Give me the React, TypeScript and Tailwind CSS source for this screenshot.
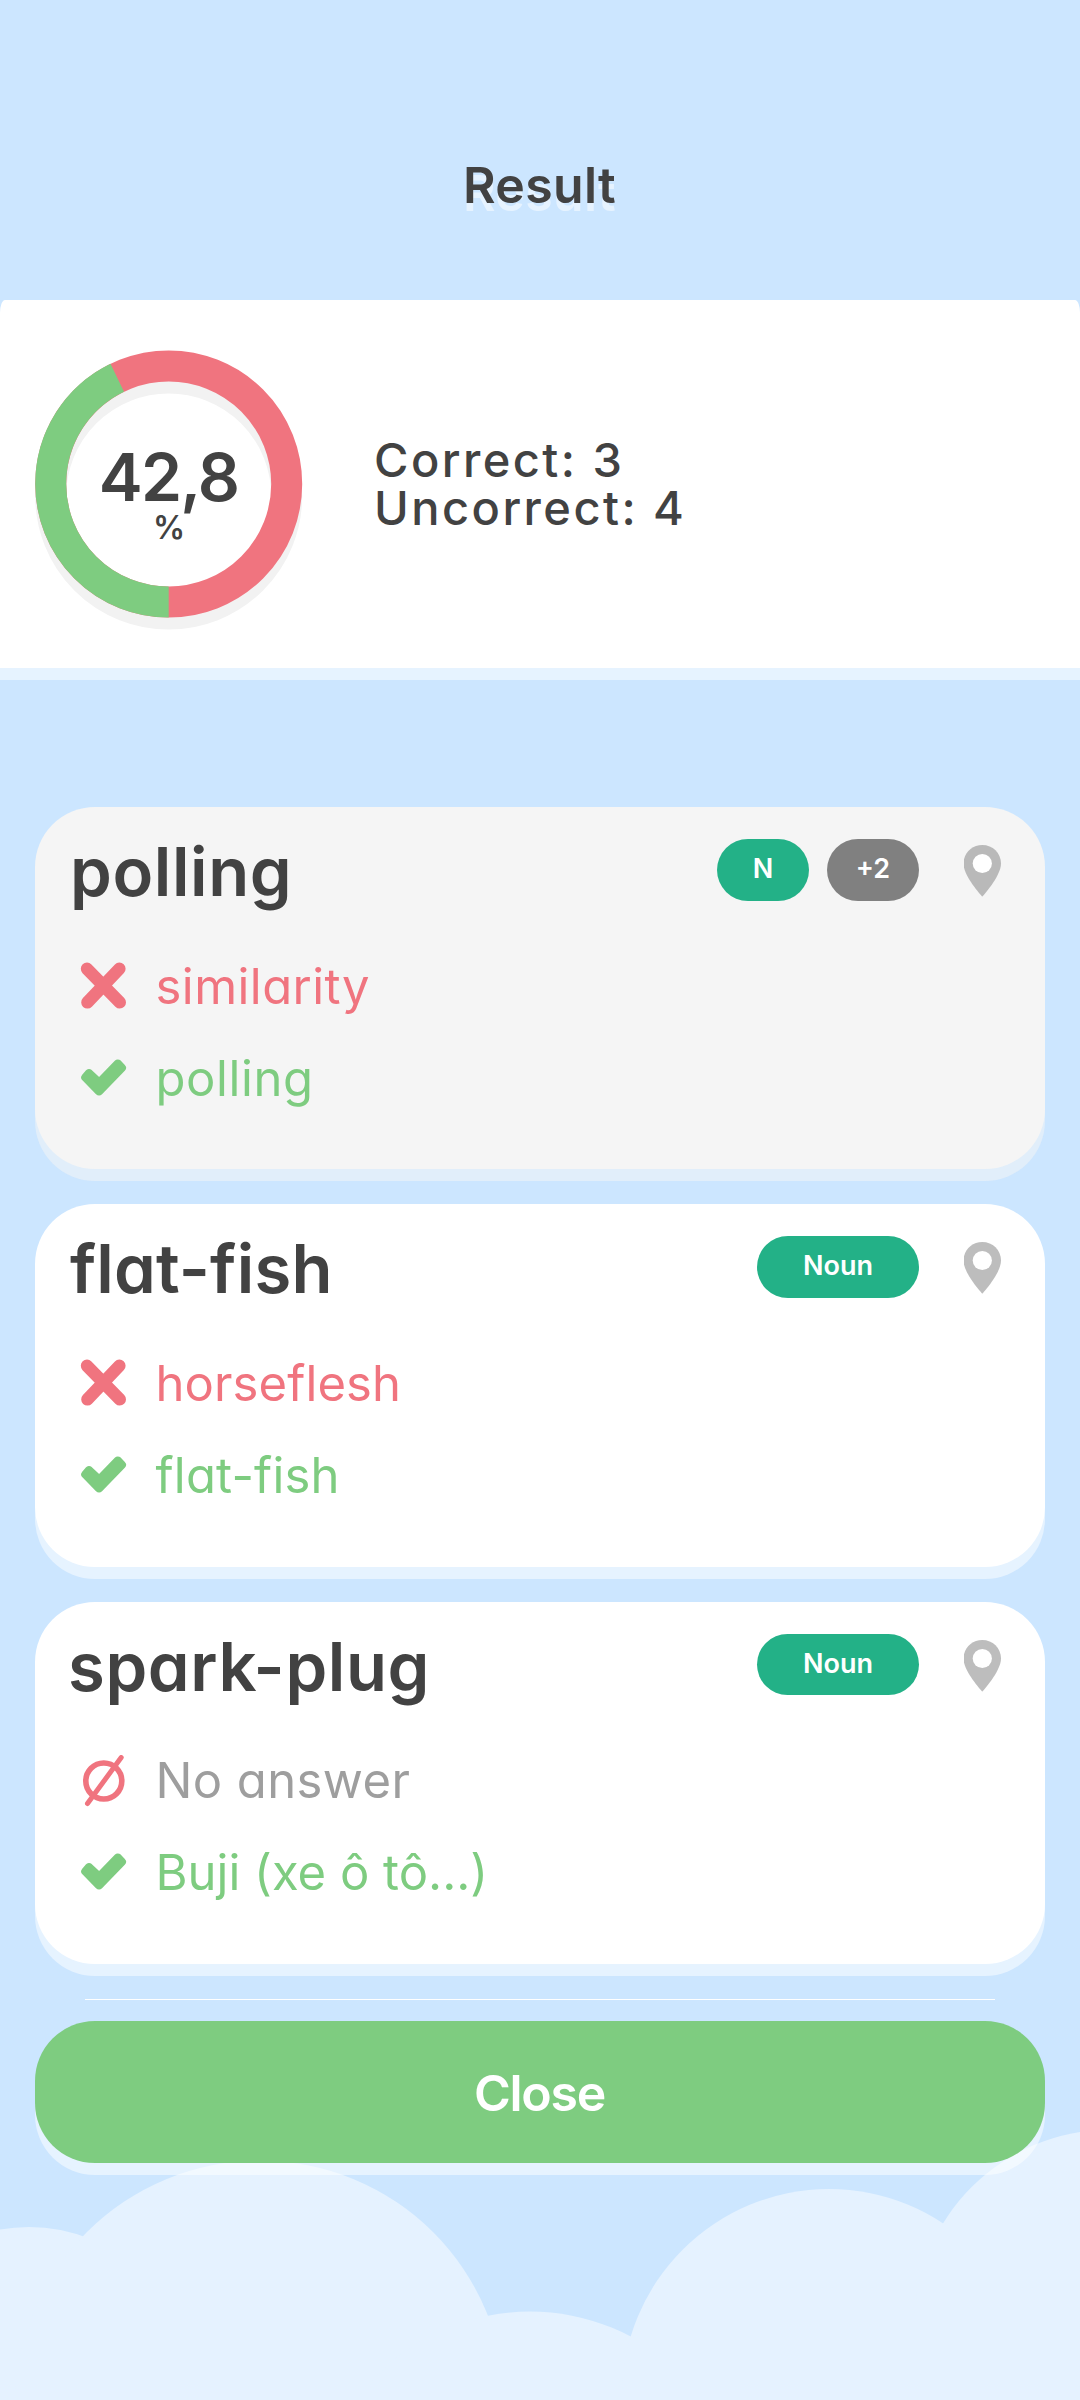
const BASE = "font-['Inter',sans-serif] [font-feature-settings:'cv11']";

type Answer = { kind: 'wrong' | 'right' | 'none'; text: string; track: string };
type Word = {
  title: string;
  track: string;
  muted?: boolean;
  tags: { label: string; color: string; width: string }[];
  answers: Answer[];
};

const WORDS: Word[] = [
  {
    title: 'polling',
    track: 'tracking-[0.6px]',
    muted: true,
    tags: [
      { label: 'N', color: 'bg-[#23b187]', width: 'w-[92px]' },
      { label: '+2', color: 'bg-[#808080]', width: 'w-[92px]' },
    ],
    answers: [
      { kind: 'wrong', text: 'similarity', track: 'tracking-[0.45px]' },
      { kind: 'right', text: 'polling', track: 'tracking-[0.6px]' },
    ],
  },
  {
    title: 'flat-fish',
    track: 'tracking-[0.2px]',
    tags: [{ label: 'Noun', color: 'bg-[#23b187]', width: 'w-[162px]' }],
    answers: [
      { kind: 'wrong', text: 'horseflesh', track: 'tracking-[0.1px]' },
      { kind: 'right', text: 'flat-fish', track: 'tracking-[0.2px]' },
    ],
  },
  {
    title: 'spark-plug',
    track: '-ml-[2px] tracking-[0.6px]',
    tags: [{ label: 'Noun', color: 'bg-[#23b187]', width: 'w-[162px]' }],
    answers: [
      { kind: 'none', text: 'No answer', track: 'tracking-[0.4px]' },
      { kind: 'right', text: 'Buji (xe ô tô...)', track: 'tracking-[0px]' },
    ],
  },
];

const TEXT_COLOR = { wrong: 'text-[#f0747f]', right: 'text-[#7ecc80]', none: 'text-[#9e9e9e]' };

function AnswerIcon({ kind }: { kind: Answer['kind'] }) {
  return (
    <svg className="h-[52px] w-[48px] shrink-0" viewBox="0 0 48 52" fill="none">
      {kind === 'wrong' && (
        <path d="M8 7.8 40.8 41.4M40.4 7.8 8.4 41.4" stroke="#f0747f" strokeWidth="12.4" strokeLinecap="round" />
      )}
      {kind === 'right' && (
        <path
          d="M6.4 24.4 10 20.2 20.2 29.9 38.8 10.6 42.8 14.8 20 38.2Z"
          fill="#7ecc80"
          stroke="#7ecc80"
          strokeWidth="8.4"
          strokeLinejoin="round"
        />
      )}
      {kind === 'none' && (
        <g stroke="#f0747f" strokeLinecap="round">
          <circle cx="24.8" cy="26" r="18" strokeWidth="5.6" />
          <path d="M8.5 48.5 42.2 2.5" strokeWidth="5" />
        </g>
      )}
    </svg>
  );
}

function Pin({ color }: { color: string }) {
  return (
    <svg className="mt-[38px] ml-[44.5px] h-[52px] w-[38px] shrink-0" viewBox="0.5 0 38 52">
      <path d="M18.8 0C8.4 0 0 8 0 18.6 0 31.5 18.8 51.7 18.8 51.7S37.5 31.5 37.5 18.6C37.5 8 29.1 0 18.8 0Z" fill={color} />
      <circle cx="18.8" cy="18.5" r="9.6" fill="#fff" />
    </svg>
  );
}

function WordCard({ word }: { word: Word }) {
  return (
    <article
      className={`h-[362.4px] shrink-0 rounded-[60px] pr-[43.5px] pl-[35px] ${
        word.muted
          ? 'bg-[#f5f5f5] shadow-[0_12px_0_rgba(245,245,245,0.5)]'
          : 'bg-white shadow-[0_12px_0_rgba(255,255,255,0.5)]'
      }`}
    >
      <header className="flex h-[133.7px] items-start">
        <h2 className={`mr-auto text-[67px] leading-[129px] font-semibold text-[#424242] ${word.track}`}>{word.title}</h2>
        <div className="mt-[32px] flex gap-[18px]">
          {word.tags.map((tag) => (
            <span
              key={tag.label}
              className={`flex h-[61.5px] items-start justify-center rounded-[31px] text-[27px] leading-[59px] font-semibold text-white ${tag.width} ${tag.color}`}
            >
              {tag.label}
            </span>
          ))}
        </div>
        <Pin color={word.muted ? '#b9b9b9' : '#bdbdbd'} />
      </header>
      {word.answers.map((a) => (
        <div key={a.text} className={`flex h-[92px] items-center pl-[9px] text-[49px] leading-[92px] ${TEXT_COLOR[a.kind]}`}>
          <AnswerIcon kind={a.kind} />
          <span className={`ml-[28.5px] ${a.track}`}>{a.text}</span>
        </div>
      ))}
    </article>
  );
}

function ScoreRing() {
  const r = 118;
  const c = 2 * Math.PI * r;
  return (
    <div className="relative h-[280px] w-[268px]">
      <svg className="h-full w-full" viewBox="0 0 268 280" fill="none" strokeWidth="31">
        <circle cx="133.7" cy="146" r={r} stroke="#f2f2f2" />
        <circle cx="133.7" cy="134" r={r} stroke="#f0747f" />
        <circle
          cx="133.7"
          cy="134"
          r={r}
          stroke="#7ecc80"
          strokeDasharray={`${c * 0.428} ${c}`}
          transform="rotate(90 133.7 134)"
        />
      </svg>
      <div className="absolute inset-0 flex flex-col items-center pr-[1px] text-[#424242]">
        <span className="mt-[94px] text-[66px] leading-[66px] font-semibold tracking-[-1.8px]">42,8</span>
        <span className="text-[32px] leading-[36px] font-semibold tracking-[-1px]">%</span>
      </div>
    </div>
  );
}

export default function App() {
  return (
    <main className={`relative flex h-[2400px] w-[1080px] flex-col overflow-hidden bg-[#cce6ff] ${BASE}`}>
      <svg className="absolute bottom-0 left-0 h-[300px] w-[1080px]" viewBox="0 2100 1080 300" fill="#e5f2ff">
        <circle cx="29" cy="2389" r="162" />
        <circle cx="260" cy="2405.5" r="245" />
        <circle cx="530" cy="2526.5" r="215" />
        <circle cx="829" cy="2396" r="207" />
        <circle cx="1110" cy="2325.4" r="195.7" />
      </svg>

      <h1 className="h-[300px] shrink-0 pr-[1px] text-center text-[50px] leading-[371px] font-semibold tracking-[0.3px] text-[#424242] [text-shadow:0_8px_0_rgba(255,255,255,0.5)]">
        Result
      </h1>

      <section className="flex h-[368px] shrink-0 items-start bg-white pt-[50px] pl-[35px] shadow-[0_12px_0_rgba(255,255,255,0.5)] [border-radius:5px_5px_0_0/13px_13px_0_0]">
        <ScoreRing />
        <div className="mt-[86px] ml-[71px] text-[47px] leading-[48px] font-medium tracking-[2.45px] text-[#424242]">
          <p>Correct: 3</p>
          <p>Uncorrect: 4</p>
        </div>
      </section>

      <div className="mt-[139px] flex shrink-0 flex-col gap-[35px] px-[35px]">
        {WORDS.map((w) => (
          <WordCard key={w.title} word={w} />
        ))}
      </div>

      <div className="mx-[85px] mt-[35px] h-px shrink-0 bg-white" />
      <button className="relative mx-[35px] mt-[21px] h-[142px] shrink-0 rounded-[60px] bg-[#7ecc80] pt-[1px] pr-[1px] text-[50px] leading-[142px] font-semibold tracking-[-1.3px] text-white shadow-[0_12px_0_rgba(255,255,255,0.5)]">
        Close
      </button>
    </main>
  );
}
